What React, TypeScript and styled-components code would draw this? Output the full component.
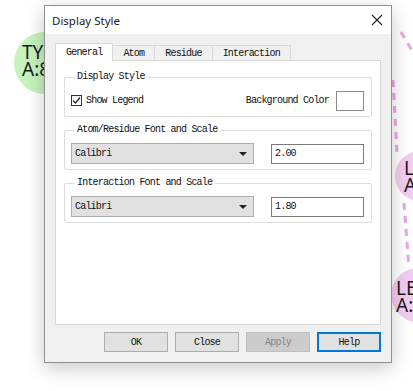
import { createGlobalStyle } from "styled-components";
import styled from "styled-components";

const GlobalStyle = createGlobalStyle`
  html, body {
    margin: 0;
    padding: 0;
    background: #ffffff;
    overflow: hidden;
  }
`;

const dlgFont = `"Liberation Mono", "DejaVu Sans Mono", monospace`;

const Stage = styled.div`
  position: relative;
  width: 413px;
  height: 391px;
  overflow: hidden;
  background: #ffffff;
  padding: 5px 0 0 44px;
  box-sizing: border-box;
`;

const Backdrop = styled.svg`
  position: absolute;
  left: 0;
  top: 0;
  width: 413px;
  height: 391px;
`;

const NodeLabel = styled.div<{ $x: number; $y: number }>`
  position: absolute;
  left: ${(p) => p.$x}px;
  top: ${(p) => p.$y}px;
  font-family: "Noto Sans", "Liberation Sans", sans-serif;
  font-size: 19px;
  line-height: 17px;
  color: #1a1a1a;
  white-space: pre;
`;

const Window = styled.div`
  position: relative;
  width: 348px;
  height: 358px;
  box-sizing: border-box;
  border: 1px solid #8f8f8f;
  background: #f0f0f0;
  box-shadow: 0 5px 18px rgba(0, 0, 0, 0.22);
  display: flex;
  flex-direction: column;
`;

const TitleBar = styled.div`
  height: 28px;
  background: #ffffff;
  display: flex;
  align-items: center;
  justify-content: space-between;
  padding: 0 6px 0 7px;
  font-family: "Noto Sans", "Open Sans", sans-serif;
  font-size: 11.5px;
  color: #1a1a1a;
`;

const CloseX = styled.svg`
  width: 12px;
  height: 12px;
  margin-right: 2px;
`;

const Body = styled.div`
  flex: 1;
  display: flex;
  flex-direction: column;
  padding: 9px 10px 10px 10px;
  font-family: ${dlgFont};
  font-size: 10px;
  letter-spacing: -0.8px;
  color: #111;
`;

const TabStrip = styled.div`
  display: flex;
  align-items: flex-end;
  height: 18px;
  margin-bottom: -1px;
  position: relative;
  z-index: 1;
`;

const Tab = styled.div<{ $active?: boolean }>`
  height: ${(p) => (p.$active ? 18 : 15)}px;
  margin-bottom: ${(p) => (p.$active ? 0 : 1)}px;
  padding: 0 10px;
  display: flex;
  align-items: center;
  justify-content: center;
  box-sizing: border-box;
  border: 1px solid #d9d9d9;
  border-bottom: none;
  background: ${(p) => (p.$active ? "#ffffff" : "#f0f0f0")};
  & + & {
    margin-left: -1px;
  }
`;

const Panel = styled.div`
  flex: 1;
  background: #ffffff;
  border: 1px solid #d9d9d9;
  padding: 10px 8px 0 8px;
  display: flex;
  flex-direction: column;
  gap: 7px;
`;

const Group = styled.fieldset<{ $top: number; $bottom: number }>`
  margin: 0;
  padding: ${(p) => p.$top}px 7px ${(p) => p.$bottom}px 6px;
  border: 1px solid #dcdcdc;
  border-radius: 2px;
  min-width: 0;
`;

const Legend = styled.legend`
  padding: 0 3px;
  margin-left: 3px;
  line-height: 12px;
`;

const Row = styled.div`
  display: flex;
  align-items: center;
  justify-content: space-between;
  height: 21px;
`;

const CheckLabel = styled.label`
  display: flex;
  align-items: center;
  gap: 4px;
`;

const CheckBox = styled.span`
  width: 11px;
  height: 11px;
  box-sizing: border-box;
  border: 1px solid #333;
  background: #fff;
  display: flex;
  align-items: center;
  justify-content: center;
`;

const ColorField = styled.div`
  display: flex;
  align-items: center;
  gap: 7px;
`;

const Swatch = styled.div`
  width: 28px;
  height: 20px;
  box-sizing: border-box;
  border: 1px solid #8a8a8a;
  background: #ffffff;
`;

const Combo = styled.div`
  width: 183px;
  height: 21px;
  box-sizing: border-box;
  background: #e1e1e1;
  border: 1px solid #adadad;
  display: flex;
  align-items: center;
  justify-content: space-between;
  padding: 0 6px 0 3px;
`;

const Arrow = styled.span`
  width: 0;
  height: 0;
  border-left: 4px solid transparent;
  border-right: 4px solid transparent;
  border-top: 4px solid #222;
`;

const TextInput = styled.div`
  width: 93px;
  height: 20px;
  box-sizing: border-box;
  background: #ffffff;
  border: 1px solid #7a7a7a;
  display: flex;
  align-items: center;
  padding-left: 3px;
`;

const ButtonRow = styled.div`
  display: flex;
  justify-content: flex-end;
  gap: 7px;
  margin-top: 7px;
`;

const Button = styled.div<{ $variant?: "default" | "disabled" | "focus" }>`
  width: 64px;
  height: 20px;
  box-sizing: border-box;
  display: flex;
  align-items: center;
  justify-content: center;
  background: ${(p) => (p.$variant === "disabled" ? "#cccccc" : "#e1e1e1")};
  color: ${(p) => (p.$variant === "disabled" ? "#838383" : "#111")};
  border: 1px solid
    ${(p) =>
      p.$variant === "focus"
        ? "#0078d7"
        : p.$variant === "disabled"
        ? "#bfbfbf"
        : "#adadad"};
  box-shadow: ${(p) => (p.$variant === "focus" ? "inset 0 0 0 1px #0078d7" : "none")};
`;

export default function App() {
  return (
    <Stage>
      <GlobalStyle />
      <Backdrop viewBox="0 0 413 391">
        <circle cx="45" cy="63" r="31" fill="#c6f2bd" />
        <circle cx="420" cy="176" r="25" fill="#f3cdef" />
        <circle cx="418" cy="295" r="27" fill="#f3cdef" />
        <g stroke="#eaa6e3" strokeWidth="3" strokeDasharray="7 6" fill="none">
          <line x1="401" y1="32" x2="413" y2="52" />
          <line x1="393" y1="80" x2="397" y2="153" />
          <line x1="404" y1="203" x2="409" y2="268" />
        </g>
      </Backdrop>
      <NodeLabel $x={22} $y={44}>{"TY\nA:8"}</NodeLabel>
      <NodeLabel $x={404} $y={160}>{"L\nA"}</NodeLabel>
      <NodeLabel $x={396} $y={280}>{"LE\nA:1"}</NodeLabel>

      <Window>
        <TitleBar>
          <span>Display Style</span>
          <CloseX viewBox="0 0 12 12">
            <path d="M1 1 L11 11 M11 1 L1 11" stroke="#222" strokeWidth="1.1" />
          </CloseX>
        </TitleBar>
        <Body>
          <TabStrip>
            <Tab $active>General</Tab>
            <Tab>Atom</Tab>
            <Tab>Residue</Tab>
            <Tab>Interaction</Tab>
          </TabStrip>
          <Panel>
            <Group $top={7} $bottom={5}>
              <Legend>Display Style</Legend>
              <Row>
                <CheckLabel>
                  <CheckBox>
                    <svg width="9" height="9" viewBox="0 0 9 9">
                      <path d="M1 4.5 L3.5 7 L8 1.5" stroke="#222" strokeWidth="1.2" fill="none" />
                    </svg>
                  </CheckBox>
                  Show Legend
                </CheckLabel>
                <ColorField>
                  Background Color
                  <Swatch />
                </ColorField>
              </Row>
            </Group>
            <Group $top={7} $bottom={5}>
              <Legend>Atom/Residue Font and Scale</Legend>
              <Row>
                <Combo>
                  Calibri
                  <Arrow />
                </Combo>
                <TextInput>2.00</TextInput>
              </Row>
            </Group>
            <Group $top={7} $bottom={5}>
              <Legend>Interaction Font and Scale</Legend>
              <Row>
                <Combo>
                  Calibri
                  <Arrow />
                </Combo>
                <TextInput>1.80</TextInput>
              </Row>
            </Group>
          </Panel>
          <ButtonRow>
            <Button>OK</Button>
            <Button>Close</Button>
            <Button $variant="disabled">Apply</Button>
            <Button $variant="focus">Help</Button>
          </ButtonRow>
        </Body>
      </Window>
    </Stage>
  );
}
